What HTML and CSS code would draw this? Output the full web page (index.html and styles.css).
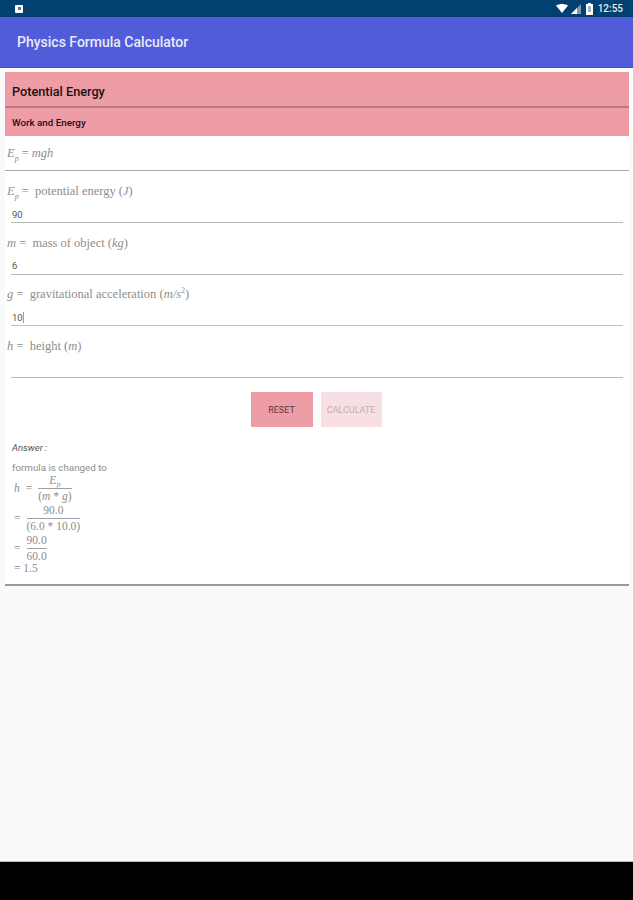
FILE: index.html
```html
<!DOCTYPE html>
<html lang="en">
<head>
    <meta charset="UTF-8">
    <meta name="viewport" content="width=device-width, initial-scale=1">
    <title>Physics Formula Calculator</title>
    <link rel="stylesheet" href="styles.css">
</head>
<body>
    <!-- Status bar -->
    <div class="status-bar">
        <div class="status-app"><div class="status-app-dot"></div></div>
        <div class="status-right">
            <svg width="12" height="9" viewBox="0 0 12 9"><path d="M0 1.5C3.5 -.5 8.5 -.5 12 1.5L6 9Z" fill="#fff"/></svg>
            <svg width="10" height="10" viewBox="0 0 10 10"><path d="M10 0V10H0Z" fill="#7f9ab0"/><path d="M6 4V10H0Z" fill="#fff"/></svg>
            <svg class="battery" width="7" height="12" viewBox="0 0 7 12"><path d="M2 0H5V1H7V12H0V1H2Z" fill="#fff"/><path d="M2 3H5V9H2Z" fill="#9fb3c4"/></svg>
            <span class="status-time">12:55</span>
        </div>
    </div>

    <!-- App bar -->
    <header class="app-bar">Physics Formula Calculator</header>

    <div class="card">
        <div class="card-head">
            <div class="card-title">Potential Energy</div>
            <div class="card-sub">Work and Energy</div>
        </div>

        <div class="formula-row math"><i>E<sub>p</sub></i> = <i>mgh</i></div>

        <div class="fields">
            <div class="field">
                <div class="field-label math"><i>E<sub>p</sub></i> = &nbsp;potential energy (<i>J</i>)</div>
                <div class="field-input">90</div>
            </div>
            <div class="field">
                <div class="field-label math"><i>m</i> = &nbsp;mass of object (<i>kg</i>)</div>
                <div class="field-input">6</div>
            </div>
            <div class="field">
                <div class="field-label math"><i>g</i> = &nbsp;gravitational acceleration (<i>m/s</i><sup>2</sup>)</div>
                <div class="field-input focused">10<span class="caret"></span></div>
            </div>
            <div class="field">
                <div class="field-label math"><i>h</i> = &nbsp;height (<i>m</i>)</div>
                <div class="field-input"></div>
            </div>
        </div>

        <div class="buttons">
            <button class="btn btn-reset">RESET</button>
            <button class="btn btn-calc">CALCULATE</button>
        </div>

        <div class="answer">
            <div class="answer-title">Answer :</div>
            <div class="answer-note">formula is changed to</div>
            <div class="step math">
                <i>h</i> =
                <span class="frac"><span class="num"><i>E<sub>p</sub></i></span><span class="den">(<i>m</i> * <i>g</i>)</span></span>
            </div>
            <div class="step math">
                =
                <span class="frac"><span class="num">90.0</span><span class="den">(6.0 * 10.0)</span></span>
            </div>
            <div class="step math">
                =
                <span class="frac"><span class="num">90.0</span><span class="den">60.0</span></span>
            </div>
            <div class="step math">= 1.5</div>
        </div>
    </div>

    <div class="nav-bar"></div>
</body>
</html>
```

FILE: styles.css
```css
* {
    margin: 0;
    padding: 0;
    box-sizing: border-box;
}

body {
    display: flex;
    flex-direction: column;
    height: 900px;
    background: #fafafa;
    font-family: Roboto, "Liberation Sans", sans-serif;
    overflow: hidden;
}

/* Status bar */
.status-bar {
    display: flex;
    justify-content: space-between;
    align-items: center;
    height: 17px;
    padding: 0 10px 0 15px;
    background: #01416f;
}

.status-app {
    display: flex;
    justify-content: center;
    align-items: center;
    width: 8px;
    height: 8px;
    background: #fff;
    border-radius: 1px;
}

.status-app-dot {
    width: 3px;
    height: 3px;
    background: #5a7488;
}

.status-right {
    display: flex;
    align-items: center;
    gap: 3px;
}

.battery {
    margin: 0 2px;
}

.status-time {
    font-size: 10px;
    font-weight: 500;
    color: #e6edf3;
}

/* App bar */
.app-bar {
    display: flex;
    align-items: center;
    height: 51px;
    padding-left: 17px;
    background: #515cdb;
    border-bottom: 1px solid #4650c4;
    color: #e8eafb;
    font-size: 14px;
    font-weight: 500;
}

/* Card */
.card {
    margin: 4px 4px 0 5px;
    height: 514px;
    background: #fff;
    border-bottom: 2px solid #9a9a9a;
}

.card-head {
    background: #ee9ca6;
    color: #1c1012;
}

.card-title {
    display: flex;
    align-items: center;
    height: 36px;
    padding: 5px 0 0 7px;
    border-bottom: 2px solid #b57a82;
    font-size: 12.7px;
    font-weight: 500;
}

.card-sub {
    display: flex;
    align-items: center;
    height: 28px;
    padding-left: 7px;
    font-size: 9.8px;
    font-weight: 500;
}

.math {
    font-family: "Liberation Serif", serif;
    color: #8e8e8e;
}

.formula-row {
    display: flex;
    align-items: center;
    gap: 3px;
    height: 35px;
    padding-left: 2px;
    border-bottom: 1.5px solid #a8a8a8;
    font-size: 12.5px;
}

sub, sup {
    font-size: 8px;
    line-height: 0;
}

/* Input fields */
.fields {
    display: flex;
    flex-direction: column;
    gap: 11.5px;
    padding: 12px 6px 0 2px;
}

.field-label {
    height: 17px;
    line-height: 17px;
    font-size: 12.5px;
}

.field-input {
    display: flex;
    align-items: center;
    height: 23px;
    margin-left: 4px;
    padding: 6px 0 0 1px;
    border-bottom: 1.5px solid #b8b8b8;
    font-size: 9.5px;
    color: #555;
}

.field-input.focused {
    border-bottom-color: #b9bdf0;
}

.caret {
    width: 1px;
    height: 11px;
    background: #8f96e6;
}

/* Buttons */
.buttons {
    display: flex;
    justify-content: center;
    gap: 8px;
    padding: 14.5px 2px 0 0;
}

.btn {
    width: 62px;
    height: 35px;
    border: none;
    font-family: Roboto, "Liberation Sans", sans-serif;
    font-size: 9px;
}

.btn-reset {
    background: #ee9ca6;
    color: #5e3a40;
}

.btn-calc {
    width: 61px;
    background: #f8dfe3;
    color: #c0b0b3;
}

/* Answer */
.answer {
    padding: 14.5px 0 0 7px;
}

.answer-title {
    font-size: 9.5px;
    font-style: italic;
    color: #555;
}

.answer-note {
    margin-top: 9.5px;
    font-size: 9.8px;
    color: #8e8e8e;
}

.step {
    display: flex;
    align-items: center;
    gap: 6px;
    padding-left: 2px;
    font-size: 11.5px;
    line-height: 15px;
}

.step:last-child {
    margin-top: -2px;
}

.frac {
    display: inline-flex;
    flex-direction: column;
    align-items: center;
    line-height: 14.5px;
}

.num {
    align-self: stretch;
    text-align: center;
    border-bottom: 1px solid #a0a0a0;
}

/* Bottom nav */
.nav-bar {
    margin-top: auto;
    height: 39px;
    background: #000;
    border-top: 1px solid #bbb;
}
```
